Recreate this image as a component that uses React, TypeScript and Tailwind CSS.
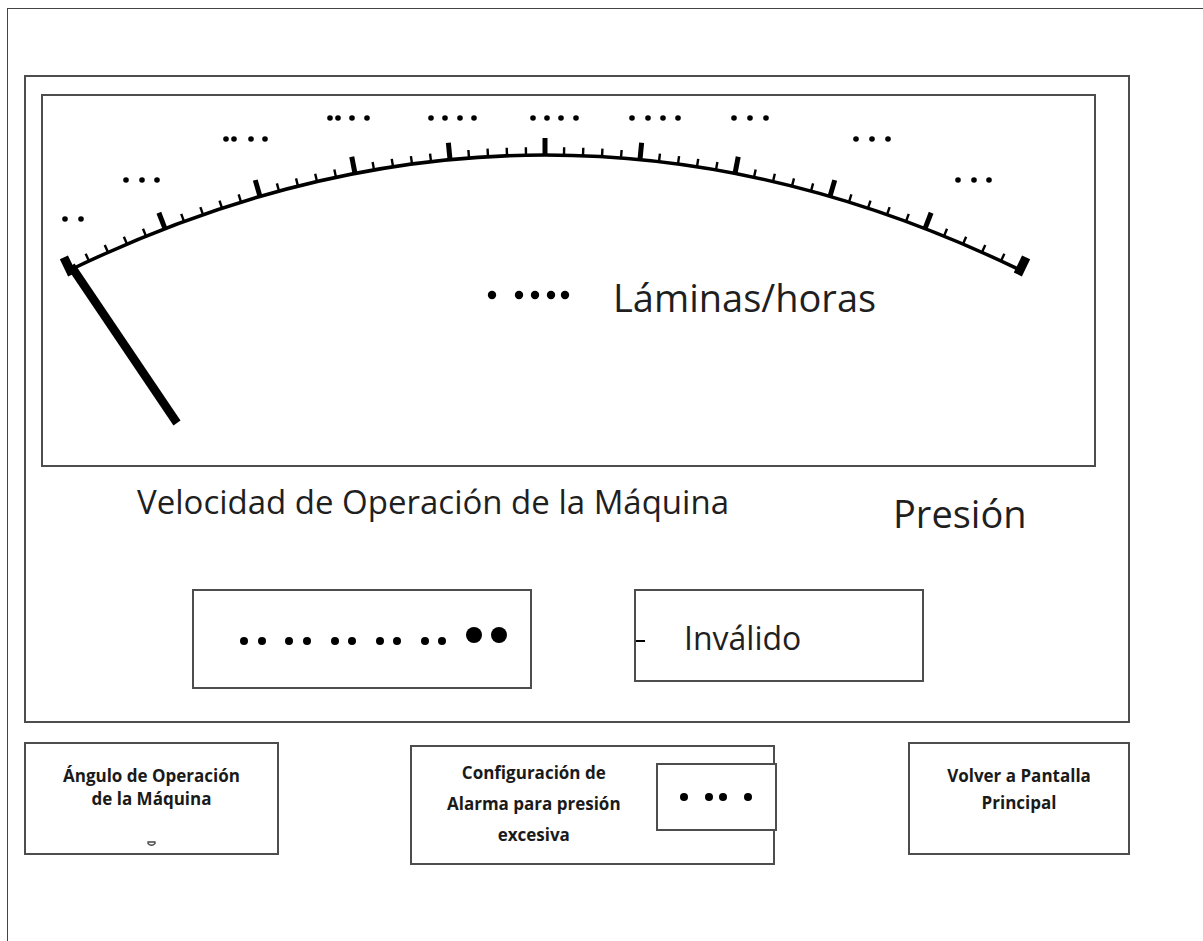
import React from "react";

const P0 = { x: 70, y: 270 };
const C = { x: 545, y: 40 };
const P2 = { x: 1020, y: 270 };

const pointAt = (t: number) => ({
  x: (1 - t) * (1 - t) * P0.x + 2 * t * (1 - t) * C.x + t * t * P2.x,
  y: (1 - t) * (1 - t) * P0.y + 2 * t * (1 - t) * C.y + t * t * P2.y,
});

// normal pointing out of the arc (up)
const normalAt = (t: number) => {
  const dx = 2 * (1 - t) * (C.x - P0.x) + 2 * t * (P2.x - C.x);
  const dy = 2 * (1 - t) * (C.y - P0.y) + 2 * t * (P2.y - C.y);
  const len = Math.hypot(dx, dy);
  return { x: dy / len, y: -dx / len };
};

// dots above the scale, one group per major tick
const labels: { y: number; xs: number[] }[] = [
  { y: 219, xs: [65, 81] },
  { y: 180, xs: [126, 142, 157] },
  { y: 139, xs: [226, 234, 251, 265] },
  { y: 118, xs: [330, 338, 352, 367] },
  { y: 118, xs: [431, 445, 460, 474] },
  { y: 118, xs: [533, 547, 561, 576] },
  { y: 118, xs: [632, 648, 663, 678] },
  { y: 118, xs: [734, 750, 766] },
  { y: 139, xs: [856, 872, 888] },
  { y: 180, xs: [958, 974, 989] },
];

const Gauge = () => {
  const ticks = [];
  for (let i = 0; i <= 50; i++) {
    const t = i / 50;
    const p = pointAt(t);
    const n = normalAt(t);
    if (i === 0 || i === 50) {
      ticks.push(
        <line key={i} x1={p.x - n.x * 5} y1={p.y - n.y * 5} x2={p.x + n.x * 14} y2={p.y + n.y * 14} stroke="#000" strokeWidth={9} />
      );
    } else if (i % 5 === 0) {
      ticks.push(
        <line key={i} x1={p.x} y1={p.y} x2={p.x + n.x * 17} y2={p.y + n.y * 17} stroke="#000" strokeWidth={5} />
      );
    } else {
      ticks.push(
        <line key={i} x1={p.x} y1={p.y} x2={p.x + n.x * 8} y2={p.y + n.y * 8} stroke="#000" strokeWidth={2.4} />
      );
    }
  }
  return (
    <svg viewBox="43 96 1051 369" className="w-full h-full">
      <path d={`M ${P0.x} ${P0.y} Q ${C.x} ${C.y} ${P2.x} ${P2.y}`} fill="none" stroke="#000" strokeWidth={3.5} />
      {ticks}
      <line x1={71} y1={266} x2={177} y2={423} stroke="#000" strokeWidth={8.5} />
      {labels.map((l, i) =>
        l.xs.map((x, j) => <circle key={`${i}-${j}`} cx={x} cy={l.y} r={2.8} fill="#000" />)
      )}
      {[492, 519, 535, 551, 565].map((x) => (
        <circle key={x} cx={x} cy={295} r={4.2} fill="#000" />
      ))}
    </svg>
  );
};

const Dot = ({ big }: { big?: boolean }) => (
  <span className={big ? "block w-[16px] h-[16px] rounded-full bg-black" : "block w-[8px] h-[8px] rounded-full bg-black"} />
);

export default function App() {
  return (
    <div className="w-[1203px] h-[941px] bg-white overflow-hidden font-['Open_Sans',sans-serif] text-[#1f1f1f]">
      <div className="mt-[8px] ml-[7px] h-[933px] border-t border-l border-[#444] pl-[16px] pt-[66px]">
        {/* main panel */}
        <div className="w-[1106px] h-[648px] border-2 border-[#4d4d4d] flex flex-col">
          <div className="relative ml-[15px] mt-[17px] w-[1055px] h-[373px] border-2 border-[#4d4d4d]">
            <Gauge />
            <span className="absolute left-[570px] top-[182px] text-[38px] leading-none whitespace-nowrap">Láminas/horas</span>
          </div>

          <div className="flex h-[36px] mt-[18px]">
            <span className="ml-[111px] w-[756px] text-[33px] leading-none whitespace-nowrap">Velocidad de Operación de la Máquina</span>
            <span className="mt-[9px] text-[38px] leading-none whitespace-nowrap">Presión</span>
          </div>

          <div className="flex items-start mt-[68px]">
            <div className="ml-[166px] w-[340px] h-[100px] border-2 border-[#4d4d4d] flex items-center pl-[46px]">
              <div className="flex items-center gap-[10px] mt-[4px]">
                <Dot /><Dot />
              </div>
              <div className="flex items-center gap-[10px] ml-[19px] mt-[4px]">
                <Dot /><Dot />
              </div>
              <div className="flex items-center gap-[9px] ml-[20px] mt-[4px]">
                <Dot /><Dot />
              </div>
              <div className="flex items-center gap-[9px] ml-[20px] mt-[4px]">
                <Dot /><Dot />
              </div>
              <div className="flex items-center gap-[9px] ml-[20px] mt-[4px]">
                <Dot /><Dot />
              </div>
              <div className="flex items-center gap-[9px] ml-[20px] mt-[-8px]">
                <Dot big /><Dot big />
              </div>
            </div>

            <div className="ml-[102px] w-[290px] h-[93px] border-2 border-[#4d4d4d] flex items-start">
              <span className="block mt-[49px] w-[9px] h-[2px] bg-black" />
              <span className="ml-[39px] mt-[31px] text-[32px] leading-none">Inválido</span>
            </div>
          </div>
        </div>

        {/* buttons */}
        <div className="flex items-start mt-[19px] font-bold text-[17px] text-[#1a1a1a]">
          <div className="w-[255px] h-[113px] border-2 border-[#4d4d4d] flex flex-col items-center pt-[20px] leading-[23px] text-center">
            <span>Ángulo de Operación</span>
            <span>de la Máquina</span>
            <svg width="9" height="6" viewBox="0 0 9 6" className="mt-[31px]">
              <path d="M1 1 H8 V2.5 Q4.5 6 1 2.5 Z" fill="none" stroke="#444" strokeWidth="1.3" />
            </svg>
          </div>

          <div className="ml-[131px] mt-[3px] w-[365px] h-[120px] border-2 border-[#4d4d4d] flex items-start">
            <div className="w-[245px] flex flex-col items-center pt-[10px] leading-[31px] text-center">
              <span>Configuración de</span>
              <span>Alarma para presión</span>
              <span>excesiva</span>
            </div>
            <div className="mt-[16px] -mr-[4px] w-[122px] h-[68px] border-2 border-[#4d4d4d] bg-white flex items-center pl-[22px]">
              <Dot />
              <span className="ml-[17px]"><Dot /></span>
              <span className="ml-[6px]"><Dot /></span>
              <span className="ml-[17px]"><Dot /></span>
            </div>
          </div>

          <div className="ml-[133px] w-[222px] h-[113px] border-2 border-[#4d4d4d] flex flex-col items-center pt-[18px] leading-[27px] text-center">
            <span>Volver a Pantalla</span>
            <span>Principal</span>
          </div>
        </div>
      </div>
    </div>
  );
}
